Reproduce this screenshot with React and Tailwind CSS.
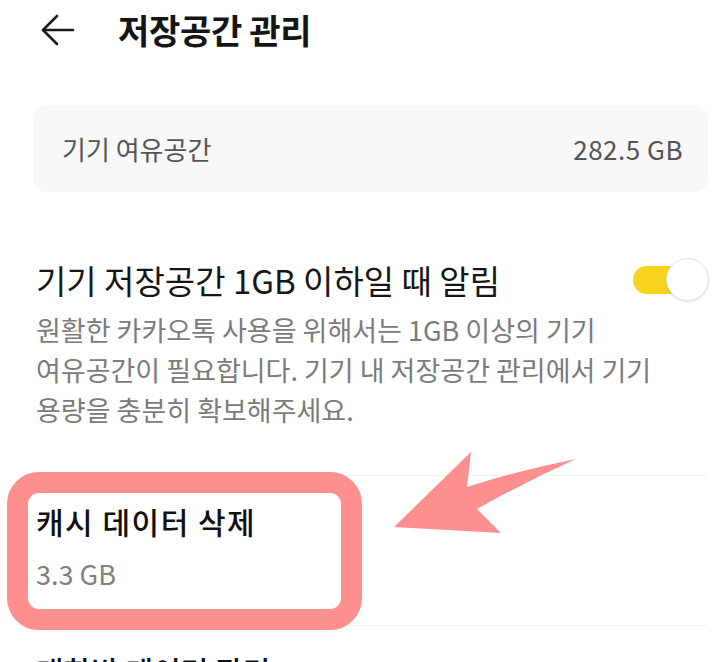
import React from 'react';

const font = { fontFamily: '"Noto Sans CJK KR", "Noto Sans", sans-serif' };

const BackArrow = () => (
    <svg width="34" height="32" viewBox="0 0 34 32" fill="none" stroke="#1a1a1a" strokeWidth="2.6" strokeLinecap="round" strokeLinejoin="round">
        <path d="M32 16H3" />
        <path d="M16 2L2 16l14 14" />
    </svg>
);

const Toggle = () => (
    <div className="relative w-[76px] h-[44px]">
        <div className="absolute left-0 top-[8px] w-[62px] h-[28px] rounded-full bg-[#f6d31c]" />
        <div className="absolute right-0 top-0 w-[43px] h-[43px] rounded-full bg-white border border-[#e2e2e2] shadow-[0_1px_2px_rgba(0,0,0,0.12)]" />
    </div>
);

const PointerArrow = () => (
    <svg className="absolute left-0 top-0 pointer-events-none" width="725" height="662" viewBox="0 0 725 662">
        <path
            d="M576 459 Q520 470 467 487 L471 452 L394 527 L501 533 L477 509 Q525 482 576 459 Z"
            fill="#fd8f8f"
        />
    </svg>
);

export default function App() {
    return (
        <div className="relative w-[725px] h-[662px] overflow-hidden bg-white" style={font}>
            <header className="flex items-center h-[60px] pl-[41px]">
                <BackArrow />
                <h1 className="ml-[43px] text-[34px] font-bold text-[#151515] tracking-[-0.3px] leading-none">저장공간 관리</h1>
            </header>

            <div className="mt-[45px] ml-[33px] mr-[17px] h-[87px] rounded-[14px] bg-[#f8f8f8] flex items-center justify-between pl-[29px] pr-[25px]">
                <span className="text-[26px] text-[#555]">기기 여유공간</span>
                <span className="text-[26px] text-[#555] tracking-[0.5px]">282.5 GB</span>
            </div>

            <div className="mt-[66px] flex items-center justify-between pl-[36px] pr-[16px]">
                <span className="text-[33px] leading-[44px] text-[#161616]">기기 저장공간 1GB 이하일 때 알림</span>
                <Toggle />
            </div>
            <p className="mt-[8px] pl-[36px] text-[27px] leading-[40px] text-[#7b7b7b]">
                <span className="block whitespace-nowrap">원활한 카카오톡 사용을 위해서는 1GB 이상의 기기</span>
                <span className="block whitespace-nowrap">여유공간이 필요합니다. 기기 내 저장공간 관리에서 기기</span>
                <span className="block whitespace-nowrap">용량을 충분히 확보해주세요.</span>
            </p>

            <div className="mt-[45px] ml-[33px] mr-[17px] border-t border-[#f1f1f1]" />
            <div className="h-[149px] flex flex-col pl-[36px] pt-[25px]">
                <span className="text-[30px] leading-[40px] font-medium text-[#111] tracking-[1.5px]">캐시 데이터 삭제</span>
                <span className="mt-[16px] text-[27px] leading-[34px] text-[#808080]">3.3 GB</span>
            </div>
            <div className="ml-[33px] mr-[17px] border-t border-[#f1f1f1]" />
            <div className="pl-[36px] mt-[24px]">
                <span className="text-[30px] leading-[40px] font-medium text-[#111]">대화방 데이터 관리</span>
            </div>

            <div className="absolute left-[7px] top-[472px] w-[355px] h-[158px] rounded-[32px] border-[21px] border-[#fd8f8f]" />
            <PointerArrow />
        </div>
    );
}
